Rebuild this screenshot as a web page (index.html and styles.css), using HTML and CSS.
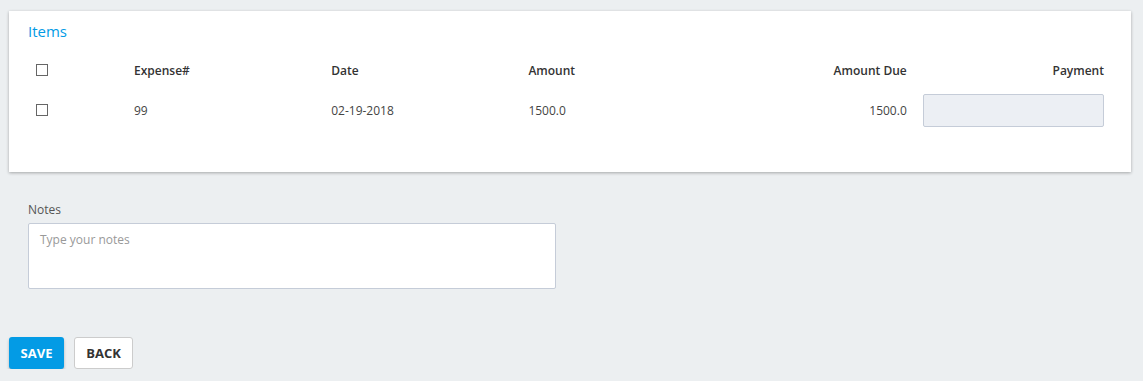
FILE: index.html
```html
<!DOCTYPE html>
<html lang="en">
<head>
    <meta charset="UTF-8">
    <meta name="viewport" content="width=device-width, initial-scale=1.0">
    <title>Expense Payment</title>
    <link rel="stylesheet" href="styles.css">
</head>
<body>
    <div class="card">
        <div class="card-title">Items</div>
        <table class="items">
            <colgroup>
                <col class="col-check">
                <col class="col-std">
                <col class="col-std">
                <col class="col-std">
                <col class="col-std">
                <col class="col-std">
            </colgroup>
            <thead>
                <tr>
                    <th><span class="checkbox"></span></th>
                    <th>Expense#</th>
                    <th>Date</th>
                    <th>Amount</th>
                    <th class="right">Amount Due</th>
                    <th class="right">Payment</th>
                </tr>
            </thead>
            <tbody>
                <tr>
                    <td><span class="checkbox"></span></td>
                    <td>99</td>
                    <td>02-19-2018</td>
                    <td>1500.0</td>
                    <td class="right">1500.0</td>
                    <td class="right"><input type="text" class="payment-input"></td>
                </tr>
            </tbody>
        </table>
    </div>

    <div class="notes">
        <label for="notes">Notes</label>
        <textarea id="notes" placeholder="Type your notes"></textarea>
    </div>

    <div class="actions">
        <button class="btn btn-primary">Save</button>
        <button class="btn btn-default">Back</button>
    </div>
</body>
</html>
```

FILE: styles.css
```css
body {
    margin: 0;
    padding: 11px 12px 0 9px;
    background-color: #eceff1;
    font-family: "Open Sans", "Liberation Sans", sans-serif;
    font-size: 12px;
    color: #444;
}
.card {
    background-color: #fff;
    box-shadow: 0 1px 3px rgba(0, 0, 0, 0.3);
    padding: 10px 19px 40px 19px;
}
.card-title {
    font-size: 15px;
    line-height: 20px;
    color: #039be5;
    margin-bottom: 11px;
}
.items {
    width: 100%;
    border-collapse: collapse;
    table-layout: fixed;
}
.items .col-check {
    width: 98px;
}
.items th {
    height: 36px;
    padding: 0 8px;
    text-align: left;
    font-weight: 600;
    color: #333;
    vertical-align: middle;
}
.items td {
    height: 44px;
    padding: 0 8px;
    text-align: left;
    vertical-align: middle;
}
.items .right {
    text-align: right;
}
.checkbox {
    display: inline-block;
    width: 10px;
    height: 10px;
    border: 1px solid #666;
    vertical-align: middle;
    margin-top: -2px;
}
.payment-input {
    box-sizing: border-box;
    width: 181px;
    height: 33px;
    background-color: #eceff4;
    border: 1px solid #c5ccd8;
    border-radius: 2px;
    display: block;
    margin-left: auto;
}
.notes {
    padding: 30px 0 0 19px;
}
.notes label {
    display: block;
    line-height: 16px;
    color: #555;
    margin-bottom: 5px;
}
.notes textarea {
    display: block;
    box-sizing: border-box;
    width: 528px;
    height: 66px;
    padding: 7px 11px;
    border: 1px solid #c5ccd8;
    border-radius: 2px;
    font-family: inherit;
    font-size: 12px;
    resize: none;
}
.notes textarea::placeholder {
    color: #999;
}
.actions {
    display: flex;
    gap: 10px;
    margin-top: 48px;
}
.btn {
    height: 32px;
    padding: 0 11px;
    font-family: inherit;
    font-size: 13px;
    font-weight: 700;
    text-transform: uppercase;
    border-radius: 3px;
    cursor: pointer;
}
.btn-primary {
    width: 55px;
    padding: 0;
    background-color: #039be5;
    color: #fff;
    border: none;
    box-shadow: 0 2px 3px rgba(0, 0, 0, 0.25);
}
.btn-default {
    width: 59px;
    padding: 0;
    background-color: #fff;
    color: #333;
    border: 1px solid #ccc;
}
```
